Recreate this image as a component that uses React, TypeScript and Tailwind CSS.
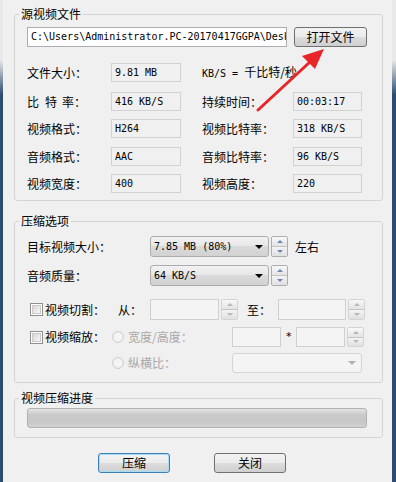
import type { ReactNode } from "react";

// fonts used throughout the dialog
const cjk = "font-['Noto_Sans_CJK_SC',sans-serif] text-[12px]";
const mono = "font-['DejaVu_Sans_Mono',monospace] text-[10px]";

const btnFace =
    "bg-[linear-gradient(to_bottom,#f2f2f2_0%,#ebebeb_50%,#dddddd_50%,#cfcfcf_100%)] rounded-[3px]";

function GroupBox({ title, className, children }: { title: string; className?: string; children: ReactNode }) {
    return (
        <fieldset className={`border border-[#d5d5d5] rounded-[3px] ${className ?? ""}`}>
            <legend className={`ml-[4px] px-[2px] leading-[16px] ${cjk}`}>{title}</legend>
            {children}
        </fieldset>
    );
}

function ValueBox({ value }: { value: string }) {
    return (
        <div className={`h-[19px] border border-[#d2d2d2] pl-[3px] leading-[17px] ${mono} text-black`}>{value}</div>
    );
}

function Spin({ disabled }: { disabled?: boolean }) {
    const arrow = disabled ? "#b8b8b8" : "#6f83b8";
    const border = disabled ? "border-[#d4d4d4]" : "border-[#adadad]";
    return (
        <div className={`ml-[2px] w-[17px] h-full flex flex-col border ${border} rounded-[2px] overflow-hidden`}>
            <div className="flex-1 flex items-center justify-center bg-[linear-gradient(to_bottom,#f8f8f8,#e4e4e4)] border-b border-[#c4c4c4]">
                <div className="w-0 h-0 border-x-[3px] border-x-transparent border-b-[3px]" style={{ borderBottomColor: arrow }} />
            </div>
            <div className="flex-1 flex items-center justify-center bg-[linear-gradient(to_bottom,#f4f4f4,#e0e0e0)]">
                <div className="w-0 h-0 border-x-[3px] border-x-transparent border-t-[3px]" style={{ borderTopColor: arrow }} />
            </div>
        </div>
    );
}

function Combo({ value, width }: { value: string; width: string }) {
    return (
        <div className={`${width} h-full flex items-center justify-between border border-[#acacac] rounded-[3px] bg-[linear-gradient(to_bottom,#f2f2f2,#e6e6e6_50%,#dadada_50%,#d2d2d2)] pl-[3px] pr-[5px]`}>
            <span className={`${mono} whitespace-pre`}>{value}</span>
            <div className="w-0 h-0 border-x-[4px] border-x-transparent border-t-[4px] border-t-black" />
        </div>
    );
}

function Checkbox() {
    return (
        <div className="w-[13px] h-[13px] border border-[#8f8f8f] p-[1px] bg-white">
            <div className="w-full h-full bg-[linear-gradient(135deg,#d8d8d8,#f7f7f7)] border border-[#c9c9c9]" />
        </div>
    );
}

function Radio() {
    return (
        <div className="w-[12px] h-[12px] rounded-full border border-[#cfcfcf] bg-[radial-gradient(circle,#f5f5f5_40%,#e6e6e6)]" />
    );
}

function DisabledBox({ width }: { width: string }) {
    return <div className={`${width} h-full border border-[#cfcfcf] bg-[#f4f4f4]`} />;
}

export default function App() {
    const gray = "text-[#a8a8a8]";

    return (
        <div className="w-[396px] h-[482px] bg-[#f0f0f0] flex relative overflow-hidden text-black">
            <div className="w-[3px] bg-[linear-gradient(to_bottom,#e9e9e9_60px,#2c4c70_95px,#2c4c70)]" />

            <div className="flex-1 pl-[11px] pr-[9px] pt-[6px]">
                {/* 源视频文件 */}
                <GroupBox title="源视频文件">
                    <div className="px-[12px] pt-[5px] pb-[7px]">
                        <div className="flex gap-[7px]">
                            <div className={`w-[260px] h-[20px] border border-[#abadb3] bg-white overflow-hidden whitespace-nowrap pl-[3px] leading-[18px] ${mono}`}>
                                C:\Users\Administrator.PC-20170417GGPA\Desktop\video.mp4
                            </div>
                            <button className={`w-[73px] h-[20px] border border-[#707070] ${btnFace} ${cjk} leading-[18px]`}>
                                打开文件
                            </button>
                        </div>

                        <div className={`mt-[15px] grid grid-cols-[84px_70px_112px_69px] gap-y-[8.5px] items-center ${cjk}`}>
                            <span className="leading-[19px]">文件大小：</span>
                            <ValueBox value="9.81 MB" />
                            <span className="col-span-2 pl-[21px] leading-[19px]">
                                <span className={mono}>KB/S = </span>千比特/秒
                            </span>

                            <span className="leading-[19px]">
                                <span className="mr-[6px]">比</span>
                                <span className="mr-[5px]">特</span>
                                率：
                            </span>
                            <ValueBox value="416 KB/S" />
                            <span className="pl-[21px] leading-[19px]">持续时间：</span>
                            <ValueBox value="00:03:17" />

                            <span className="leading-[19px]">视频格式：</span>
                            <ValueBox value="H264" />
                            <span className="pl-[21px] leading-[19px]">视频比特率：</span>
                            <ValueBox value="318 KB/S" />

                            <span className="leading-[19px]">音频格式：</span>
                            <ValueBox value="AAC" />
                            <span className="pl-[21px] leading-[19px]">音频比特率：</span>
                            <ValueBox value="96 KB/S" />

                            <span className="leading-[19px]">视频宽度：</span>
                            <ValueBox value="400" />
                            <span className="pl-[21px] leading-[19px]">视频高度：</span>
                            <ValueBox value="220" />
                        </div>
                    </div>
                </GroupBox>

                {/* 压缩选项 */}
                <GroupBox title="压缩选项" className="mt-[12px]">
                    <div className={`px-[12px] pt-[7px] pb-[9px] ${cjk}`}>
                        <div className="flex items-center h-[21px]">
                            <span className="w-[123px]">目标视频大小：</span>
                            <Combo value="7.85 MB (80%)" width="w-[119px]" />
                            <Spin />
                            <span className="ml-[7px]">左右</span>
                        </div>
                        <div className="mt-[8px] flex items-center h-[21px]">
                            <span className="w-[123px]">音频质量：</span>
                            <Combo value="64 KB/S" width="w-[119px]" />
                            <Spin />
                        </div>

                        <div className="mt-[13px] flex items-center h-[21px]">
                            <div className="w-[91px] flex items-center pl-[3px]">
                                <Checkbox />
                                <span className="ml-[2px]">视频切割：</span>
                            </div>
                            <span className="w-[32px]">从：</span>
                            <DisabledBox width="w-[69px]" />
                            <Spin disabled />
                            <span className="ml-[9px] w-[31px]">至：</span>
                            <DisabledBox width="w-[68px]" />
                            <Spin disabled />
                        </div>

                        <div className="mt-[7px] flex items-center h-[20px]">
                            <div className="w-[85px] flex items-center pl-[3px]">
                                <Checkbox />
                                <span className="ml-[2px]">视频缩放：</span>
                            </div>
                            <Radio />
                            <span className={`ml-[4px] w-[104px] ${gray}`}>宽度/高度：</span>
                            <DisabledBox width="w-[49px]" />
                            <span className="w-[15px] pl-[5px] font-['DejaVu_Sans',sans-serif] text-[11px]">*</span>
                            <DisabledBox width="w-[49px]" />
                            <Spin disabled />
                        </div>

                        <div className="mt-[6px] flex items-center h-[20px]">
                            <div className="w-[85px]" />
                            <Radio />
                            <span className={`ml-[4px] w-[104px] ${gray}`}>纵横比：</span>
                            <div className="w-[130px] h-full flex items-center justify-end border border-[#d4d4d4] rounded-[3px] bg-[#f4f4f4] pr-[5px]">
                                <div className="w-0 h-0 border-x-[4px] border-x-transparent border-t-[4px] border-t-[#b0b0b0]" />
                            </div>
                        </div>
                    </div>
                </GroupBox>

                {/* 视频压缩进度 */}
                <GroupBox title="视频压缩进度" className="mt-[7px]">
                    <div className="px-[12px] pt-[2px] pb-[9px]">
                        <div className="w-[340px] h-[20px] rounded-[3px] border border-[#b2b2b2] bg-[linear-gradient(to_bottom,#e4e4e4,#cbcbcb_30%,#c7c7c7_70%,#d2d2d2)]" />
                    </div>
                </GroupBox>

                <div className={`mt-[15px] pl-[84px] flex gap-[44px] ${cjk}`}>
                    <button className={`w-[72px] h-[20px] border border-[#3c7fb1] shadow-[inset_0_0_0_1px_#a6dcf5] ${btnFace} leading-[18px]`}>
                        压缩
                    </button>
                    <button className={`w-[72px] h-[20px] border border-[#707070] ${btnFace} leading-[18px]`}>
                        关闭
                    </button>
                </div>
            </div>

            <div className="w-[4px] bg-[linear-gradient(to_bottom,#e9e9e9_60px,#2c4c70_95px,#2c4c70)]" />

            {/* red annotation arrow */}
            <svg className="absolute inset-0 pointer-events-none" width="396" height="482" viewBox="0 0 396 482">
                <line x1="258" y1="110" x2="311" y2="61" stroke="#e8262a" strokeWidth="3" strokeLinecap="round" />
                <polygon points="324,49 315,69 302,56" fill="#e8262a" />
            </svg>
        </div>
    );
}
